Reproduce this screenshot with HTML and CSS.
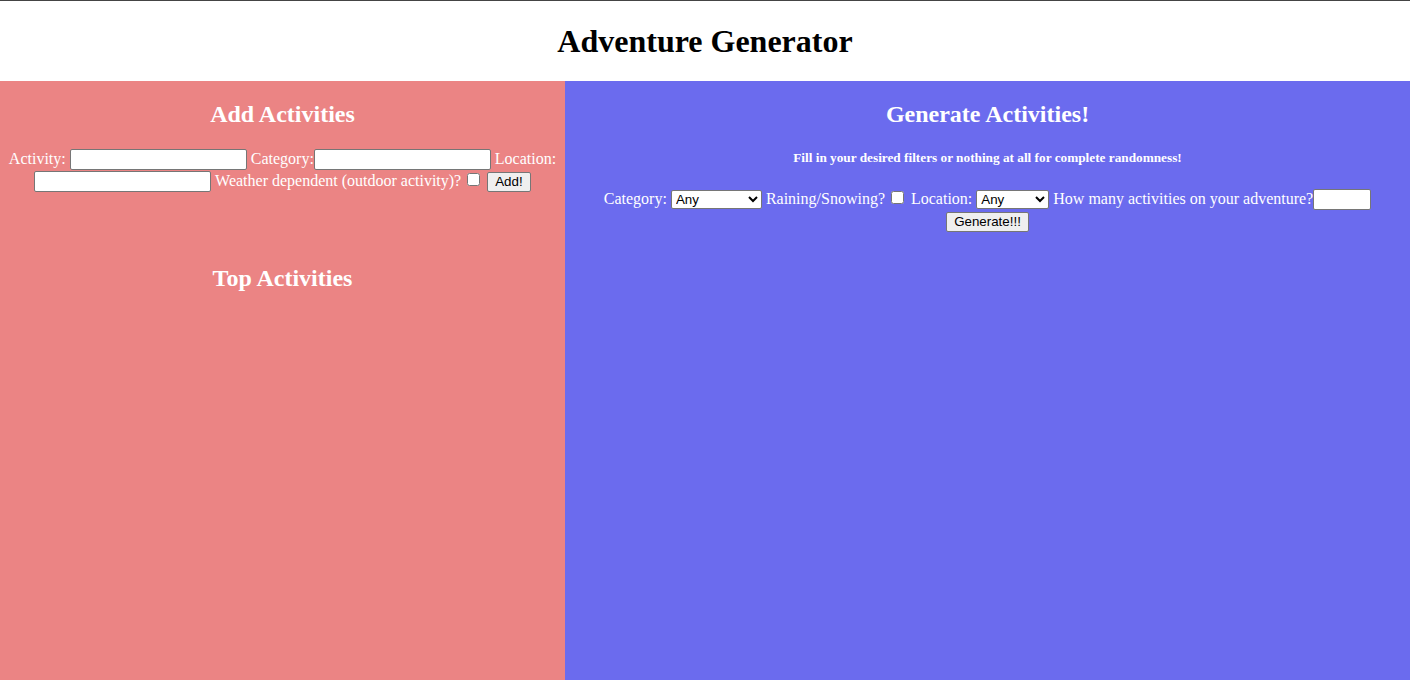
FILE: index.html
```html
<!DOCTYPE html>
<html>
<head>
<meta charset="utf-8">
<title>Adventure Generator</title>
<link rel="stylesheet" href="styles.css">
</head>
<body>
<header class="top">
  <h1 class="title">Adventure Generator</h1>
</header>
<main class="panels">
  <section class="panel panel-add">
    <h2 class="panel-title">Add Activities</h2>
    <form class="form">
      Activity: <input type="text" class="text-in"> Category:<input type="text" class="text-in"> Location: <input type="text" class="text-in"> Weather dependent (outdoor activity)? <input type="checkbox" class="check"> <button type="button" class="btn">Add!</button>
    </form>
    <h2 class="panel-title top-title">Top Activities</h2>
  </section>
  <section class="panel panel-gen">
    <h2 class="panel-title">Generate Activities!</h2>
    <h5 class="hint">Fill in your desired filters or nothing at all for complete randomness!</h5>
    <form class="form">
      Category: <select class="sel sel-cat"><option>Any</option></select> Raining/Snowing? <input type="checkbox" class="check"> Location: <select class="sel sel-loc"><option>Any</option></select> How many activities on your adventure?<input type="text" class="num-in"> <button type="button" class="btn">Generate!!!</button>
    </form>
  </section>
</main>
</body>
</html>
```

FILE: styles.css
```css
html, body {
  margin: 0;
  padding: 0;
}
body {
  font-family: "Liberation Serif", "Times New Roman", serif;
  font-size: 16px;
  background: #fff;
  color: #000;
  border-top: 1px solid #444;
}
.top {
  height: 80px;
  display: flex;
  align-items: center;
  justify-content: center;
}
.title {
  margin: 0;
  font-size: 32px;
  font-weight: bold;
}
.panels {
  display: grid;
  grid-template-columns: 565px 1fr;
  min-height: calc(100vh - 81px);
}
.panel {
  color: #fff;
  text-align: center;
  padding: 0 8px;
  overflow: hidden;
}
.panel-add {
  background: #eb8484;
}
.panel-gen {
  background: #6b6bee;
}
.panel-title {
  font-size: 24px;
  font-weight: bold;
  margin: 20px 0;
}
.top-title {
  margin-top: 73px;
}
.hint {
  font-size: 13.28px;
  font-weight: bold;
  margin: 22px 0;
}
.form {
  margin: 0;
  line-height: 22px;
}
.text-in, .num-in {
  font-family: "Liberation Sans", Arial, sans-serif;
  font-size: 13.33px;
  border: 1px solid #767676;
  border-radius: 2px;
  padding: 1px 2px;
  height: 21px;
  box-sizing: border-box;
  background: #fff;
  vertical-align: baseline;
}
.text-in {
  width: 177px;
}
.num-in {
  width: 58px;
}
.sel {
  font-family: "Liberation Sans", Arial, sans-serif;
  font-size: 13.33px;
  height: 19px;
  border: 1px solid #767676;
  border-radius: 2px;
  background: #fff;
  color: #000;
}
.sel-cat {
  width: 91px;
}
.sel-loc {
  width: 73px;
}
.check {
  margin: 3px 3px 3px 2px;
  width: 13px;
  height: 13px;
}
.btn {
  font-family: "Liberation Sans", Arial, sans-serif;
  font-size: 13.33px;
  padding: 1px 7px;
  height: 20px;
  border: 1px solid #767676;
  border-radius: 2px;
  background: #efefef;
  color: #000;
}
```
